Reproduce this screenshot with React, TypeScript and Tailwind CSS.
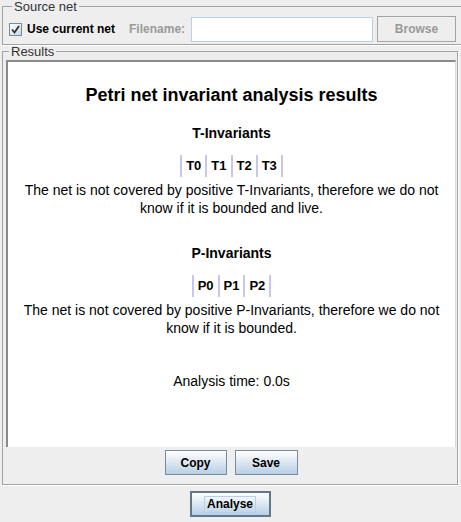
import React from 'react';

const ui = { fontFamily: '"Liberation Sans", Arial, sans-serif' };

const InvariantRow: React.FC<{ names: string[] }> = ({ names }) => (
  <div className="flex justify-center h-[22px]">
    {names.map((n, i) => (
      <div
        key={n}
        className={`border-l-2 border-[#c6c6ee] px-[4px] text-[13px] font-bold leading-[22px] ${
          i === names.length - 1 ? 'border-r-2' : ''
        }`}
      >
        {n}
      </div>
    ))}
  </div>
);

const SwingButton: React.FC<{ label: string; w: string }> = ({ label, w }) => (
  <button
    className={`${w} h-[25px] border border-[#7a8a99] bg-gradient-to-b from-[#ffffff] to-[#b8cfe5] text-[12px] font-bold text-black`}
  >
    {label}
  </button>
);

export default function App() {
  return (
    <div className="w-[461px] h-[522px] bg-[#eeeeee] text-black overflow-hidden" style={ui}>
      <div className="pl-[2px] pr-[3px]">
        {/* Source net */}
        <fieldset className="border border-[#a3a3a3] shadow-[1px_1px_0_#ffffff] h-[45px] px-[6px]">
          <legend className="ml-[3px] px-[2px] text-[13px] leading-[13px] text-[#333]">Source net</legend>
          <div className="flex items-center h-[30px] mt-[1px] whitespace-nowrap">
            <div className="shrink-0 w-[13px] h-[13px] border border-[#7a8a99] bg-gradient-to-br from-[#ffffff] to-[#c8d8e8] flex items-center justify-center">
              <svg width="9" height="9" viewBox="0 0 9 9">
                <path d="M1 4.5 L3.5 7.5 L8 1" stroke="#333" strokeWidth="1.8" fill="none" />
              </svg>
            </div>
            <span className="shrink-0 ml-[5px] text-[12px] font-bold">Use current net</span>
            <span className="shrink-0 ml-[14px] text-[12px] font-bold text-[#999999]">Filename:</span>
            <div className="shrink-0 ml-[6px] w-[182px] h-[25px] border border-[#b8cfe5] bg-white" />
            <div className="shrink-0 ml-[4px] w-[79px] h-[26px] border border-[#a3a3a3] bg-[#eeeeee] flex items-center justify-center text-[12px] font-bold text-[#999999]">
              Browse
            </div>
          </div>
        </fieldset>

        {/* Results */}
        <fieldset className="border border-[#a3a3a3] shadow-[1px_1px_0_#ffffff] h-[440px] pl-[3px] pr-[1px]">
          <legend className="ml-[3px] px-[2px] text-[13px] leading-[13px] text-[#333]">Results</legend>
          <div className="mt-[2px] h-[387px] bg-white border-l-2 border-t-2 border-[#8a8a8a] border-r border-r-[#d8d8d8] flex flex-col items-center">
            <div className="mt-[22px] h-[22px] text-[18px] font-bold leading-[22px]">
              Petri net invariant analysis results
            </div>
            <div className="mt-[18px] h-[18px] text-[14px] font-bold leading-[18px]">T-Invariants</div>
            <div className="mt-[13px]">
              <InvariantRow names={['T0', 'T1', 'T2', 'T3']} />
            </div>
            <p className="mt-[4px] text-center text-[14px] leading-[18px]">
              The net is not covered by positive T-Invariants, therefore we do not
              <br />
              know if it is bounded and live.
            </p>
            <div className="mt-[27px] h-[18px] text-[14px] font-bold leading-[18px]">P-Invariants</div>
            <div className="mt-[13px]">
              <InvariantRow names={['P0', 'P1', 'P2']} />
            </div>
            <p className="mt-[4px] text-center text-[14px] leading-[18px]">
              The net is not covered by positive P-Invariants, therefore we do not
              <br />
              know if it is bounded.
            </p>
            <div className="mt-[35px] text-[14px] leading-[18px]">Analysis time: 0.0s</div>
          </div>
          <div className="mt-[3px] flex justify-center gap-[8px]">
            <SwingButton label="Copy" w="w-[62px]" />
            <SwingButton label="Save" w="w-[63px]" />
          </div>
        </fieldset>

        {/* Analyse */}
        <div className="mt-[6px] flex justify-center">
          <button className="w-[81px] h-[26px] border-2 border-[#63768a] bg-gradient-to-b from-[#ffffff] to-[#b8cfe5] flex items-center justify-center">
            <span className="px-[2px] border border-[#b8cfe5] text-[12px] font-bold leading-[15px] text-black">
              Analyse
            </span>
          </button>
        </div>
      </div>
    </div>
  );
}
